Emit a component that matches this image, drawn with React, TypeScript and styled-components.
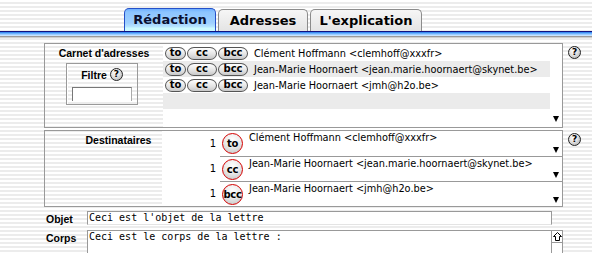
import React from 'react';
import styled, { createGlobalStyle } from 'styled-components';

const stripes = `repeating-linear-gradient(to bottom, #ffffff 0px, #ffffff 2px, #ececec 2px, #ececec 4px)`;

const Global = createGlobalStyle`
  html, body { margin: 0; padding: 0; }
  body {
    background: ${stripes};
    font-family: "DejaVu Sans", sans-serif;
    font-size: 10px;
    color: #000;
  }
  * { box-sizing: border-box; }
`;

const Page = styled.div`
  width: 592px;
  height: 253px;
  overflow: hidden;
`;

const TabBar = styled.div`
  height: 31px;
  display: flex;
  align-items: flex-end;
  gap: 2px;
  padding-left: 124px;
`;

const Tab = styled.div<{ $active?: boolean; $w: number }>`
  width: ${(p) => p.$w}px;
  height: ${(p) => (p.$active ? 23 : 22)}px;
  display: flex;
  align-items: center;
  justify-content: center;
  font-family: "DejaVu Sans", sans-serif;
  font-weight: bold;
  font-size: 13px;
  padding-bottom: ${(p) => (p.$active ? 2 : 0)}px;
  border: 1px solid ${(p) => (p.$active ? '#2450c8' : '#8c8c8c')};
  border-bottom: none;
  border-radius: 5px 5px 0 0;
  color: ${(p) => (p.$active ? '#0a1030' : '#000')};
  background: ${(p) =>
    p.$active
      ? 'linear-gradient(to bottom, #6fb0ff 0px, #8cc4ff 3px, #9fd0ff 14px, #b8e6ff 18px, #ccfaff 19px, #ccfaff 23px)'
      : 'linear-gradient(to bottom, #f6f6f6, #e4e4e4)'};
`;

const BlueRule = styled.div`
  height: 7px;
  background: linear-gradient(
    to bottom,
    #101080 0px, #101080 1px,
    #3a8cf0 1px, #3a8cf0 2px,
    #6cb2ff 2px, #6cb2ff 3px,
    #9ccdff 3px, #9ccdff 4px,
    #c8e2ff 4px, #c8e2ff 5px,
    #9a9a9a 5px, #9a9a9a 6px,
    #cfcfcf 6px, #cfcfcf 7px
  );
`;

const Content = styled.div`
  padding: 5px 0 0 44px;
  display: flex;
  flex-direction: column;
`;

const PanelRow = styled.div<{ $mt?: number }>`
  display: flex;
  align-items: flex-start;
  gap: 5px;
  margin-top: ${(p) => p.$mt ?? 0}px;
`;

const Panel = styled.div<{ $h: number }>`
  width: 519px;
  height: ${(p) => p.$h}px;
  border: 1px solid #999;
  display: flex;
`;

const LeftCol = styled.div<{ $w: number }>`
  width: ${(p) => p.$w}px;
  flex: none;
  display: flex;
  flex-direction: column;
  align-items: center;
`;

const PanelLabel = styled.div<{ $offset?: number }>`
  font-family: "Liberation Sans", Arial, sans-serif;
  font-weight: bold;
  font-size: 10.5px;
  line-height: 12px;
  margin-top: 3px;
  margin-left: ${(p) => p.$offset ?? 0}px;
`;

const FilterBox = styled.div`
  width: 72px;
  height: 42px;
  margin-top: 4px;
  margin-right: 4px;
  border: 1px solid #9a9a9a;
  box-shadow: inset 1px 1px 0 #fff;
  display: flex;
  flex-direction: column;
  align-items: center;
`;

const FilterLabel = styled.div`
  display: flex;
  align-items: center;
  gap: 3px;
  margin-top: 4px;
  font-family: "Liberation Sans", Arial, sans-serif;
  font-weight: bold;
  font-size: 10.5px;
  line-height: 12px;
`;

const FilterInput = styled.div`
  width: 60px;
  height: 14px;
  margin-top: 6px;
  background: #fff;
  border-top: 1px solid #777;
  border-left: 1px solid #777;
  border-right: 1px solid #aaa;
`;

const ListArea = styled.div`
  flex: 1;
  background: #fff;
  display: flex;
`;

const Rows = styled.div`
  flex: 1;
  display: flex;
  flex-direction: column;
  padding-top: 1px;
`;

const AddrRow = styled.div<{ $alt?: boolean }>`
  height: 16px;
  display: flex;
  align-items: center;
  gap: 1px;
  padding-left: 2px;
  background: ${(p) => (p.$alt ? '#ebebeb' : 'transparent')};
`;

const Pill = styled.div<{ $w: number }>`
  width: ${(p) => p.$w}px;
  height: 13px;
  border: 1px solid #555;
  border-radius: 7px / 6.5px;
  background: linear-gradient(to bottom, #ffffff, #e2e2e2 60%, #c8c8c8);
  display: flex;
  align-items: center;
  justify-content: center;
  font-family: "DejaVu Sans", sans-serif;
  font-weight: bold;
  font-size: 10px;
  line-height: 10px;
  padding-bottom: 1px;
`;

const Name = styled.span`
  margin-left: 5px;
  font-size: 9.75px;
  white-space: nowrap;
`;

const ScrollCol = styled.div`
  width: 12px;
  flex: none;
  display: flex;
  align-items: flex-end;
  justify-content: center;
  padding-bottom: 5px;
`;

const DownArrow = styled.div`
  width: 0;
  height: 0;
  border-left: 3.5px solid transparent;
  border-right: 3.5px solid transparent;
  border-top: 6px solid #000;
`;

const Help = styled.div`
  width: 13px;
  height: 13px;
  flex: none;
  border: 1px solid #222;
  border-radius: 50%;
  background: radial-gradient(circle at 40% 35%, #ffffff 0%, #e0e0e0 45%, #a8a8a8 100%);
  display: flex;
  align-items: center;
  justify-content: center;
  font-family: "DejaVu Sans", sans-serif;
  font-weight: bold;
  font-size: 9px;
  line-height: 9px;
`;

const HelpSlot = styled.div`
  padding-top: 3px;
`;

const DestList = styled.div`
  flex: 1;
  background: #fff;
  display: flex;
  flex-direction: column;
`;

const DestRow = styled.div`
  height: 25px;
  display: flex;
`;

const NumCell = styled.div`
  width: 58px;
  flex: none;
  display: flex;
  align-items: center;
  justify-content: flex-end;
  padding-right: 4px;
  font-size: 10px;
`;

const DestMain = styled.div<{ $first?: boolean }>`
  flex: 1;
  display: flex;
  align-items: center;
  border-top: ${(p) => (p.$first ? 'none' : '1px solid #999')};
`;

const Circle = styled.div`
  width: 21px;
  height: 21px;
  flex: none;
  margin-left: 2px;
  border: 1.5px solid #d40000;
  border-radius: 50%;
  background: radial-gradient(circle at 50% 30%, #ffffff 0%, #ececec 45%, #bdbdbd 100%);
  display: flex;
  align-items: center;
  justify-content: center;
  font-weight: bold;
  font-size: 10px;
  letter-spacing: -0.3px;
`;

const DestText = styled.div`
  flex: 1;
  align-self: flex-start;
  padding-top: 1px;
  margin-left: 6px;
  font-size: 9.75px;
  white-space: nowrap;
`;

const DestArrow = styled.div`
  width: 12px;
  align-self: flex-end;
  display: flex;
  justify-content: center;
  padding-bottom: 3px;
`;

const FieldRow = styled.div<{ $mt: number }>`
  display: flex;
  align-items: flex-start;
  margin-top: ${(p) => p.$mt}px;
`;

const FieldLabel = styled.div`
  width: 43px;
  flex: none;
  padding-left: 2px;
  padding-top: 2px;
  font-family: "Liberation Sans", Arial, sans-serif;
  font-weight: bold;
  font-size: 10.5px;
  line-height: 12px;
`;

const TextInput = styled.div`
  width: 465px;
  height: 14px;
  background: #fff;
  border: 1px solid #999;
  border-bottom-color: #e4e4e4;
  font-family: "DejaVu Sans Mono", monospace;
  font-size: 10px;
  line-height: 12px;
  padding-left: 1px;
  white-space: pre;
`;

const TextArea = styled.div`
  width: 476px;
  height: 40px;
  display: flex;
  background: #fff;
  border-top: 1px solid #999;
  border-left: 1px solid #999;
`;

const AreaText = styled.div`
  flex: 1;
  font-family: "DejaVu Sans Mono", monospace;
  font-size: 10px;
  line-height: 12px;
  padding-left: 1px;
  white-space: pre;
`;

const VScroll = styled.div`
  width: 12px;
  flex: none;
  border-left: 1px solid #999;
  border-right: 1px solid #999;
`;

const ScrollBtn = styled.div`
  height: 12px;
  border-bottom: 1px solid #999;
  display: flex;
  align-items: center;
  justify-content: center;
`;

const book = [
  { name: 'Clément Hoffmann <clemhoff@xxxfr>' },
  { name: 'Jean-Marie Hoornaert <jean.marie.hoornaert@skynet.be>' },
  { name: 'Jean-Marie Hoornaert <jmh@h2o.be>' },
];

const dests = [
  { kind: 'to', name: 'Clément Hoffmann <clemhoff@xxxfr>' },
  { kind: 'cc', name: 'Jean-Marie Hoornaert <jean.marie.hoornaert@skynet.be>' },
  { kind: 'bcc', name: 'Jean-Marie Hoornaert <jmh@h2o.be>' },
];

export default function App() {
  return (
    <Page>
      <Global />
      <TabBar>
        <Tab $active $w={92}>Rédaction</Tab>
        <Tab $w={90}>Adresses</Tab>
        <Tab $w={112}>L'explication</Tab>
      </TabBar>
      <BlueRule />
      <Content>
        <PanelRow>
          <Panel $h={85}>
            <LeftCol $w={118}>
              <PanelLabel>Carnet d'adresses</PanelLabel>
              <FilterBox>
                <FilterLabel>
                  Filtre <Help>?</Help>
                </FilterLabel>
                <FilterInput />
              </FilterBox>
            </LeftCol>
            <ListArea>
              <Rows>
                {book.map((b, i) => (
                  <AddrRow key={i} $alt={i % 2 === 1}>
                    <Pill $w={21}>to</Pill>
                    <Pill $w={30}>cc</Pill>
                    <Pill $w={30}>bcc</Pill>
                    <Name>{b.name}</Name>
                  </AddrRow>
                ))}
                <AddrRow $alt />
              </Rows>
              <ScrollCol>
                <DownArrow />
              </ScrollCol>
            </ListArea>
          </Panel>
          <HelpSlot>
            <Help>?</Help>
          </HelpSlot>
        </PanelRow>
        <PanelRow $mt={2}>
          <Panel $h={77}>
            <LeftCol $w={117}>
              <PanelLabel $offset={30}>Destinataires</PanelLabel>
            </LeftCol>
            <DestList>
              {dests.map((d, i) => (
                <DestRow key={i}>
                  <NumCell>1</NumCell>
                  <DestMain $first={i === 0}>
                    <Circle>{d.kind}</Circle>
                    <DestText>{d.name}</DestText>
                    <DestArrow>
                      <DownArrow />
                    </DestArrow>
                  </DestMain>
                </DestRow>
              ))}
            </DestList>
          </Panel>
          <HelpSlot>
            <Help>?</Help>
          </HelpSlot>
        </PanelRow>
        <FieldRow $mt={4}>
          <FieldLabel>Objet</FieldLabel>
          <TextInput>Ceci est l'objet de la lettre</TextInput>
        </FieldRow>
        <FieldRow $mt={5}>
          <FieldLabel>Corps</FieldLabel>
          <TextArea>
            <AreaText>Ceci est le corps de la lettre :</AreaText>
            <VScroll>
              <ScrollBtn>
                <svg width="9" height="9" viewBox="0 0 9 9">
                  <path d="M4.5 0.5 L8.5 4.5 L6.5 4.5 L6.5 8.5 L2.5 8.5 L2.5 4.5 L0.5 4.5 Z" fill="#fff" stroke="#000" strokeWidth="1" />
                </svg>
              </ScrollBtn>
            </VScroll>
          </TextArea>
        </FieldRow>
      </Content>
    </Page>
  );
}
